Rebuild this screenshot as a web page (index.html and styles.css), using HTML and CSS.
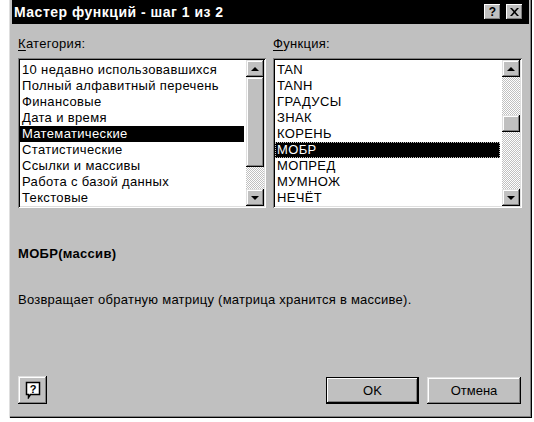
FILE: index.html
```html
<!DOCTYPE html>
<html lang="ru">
<head>
<meta charset="utf-8">
<title>Мастер функций</title>
<link rel="stylesheet" href="styles.css">
</head>
<body>
<div class="dialog">
  <div class="titlebar">
    <span class="title">Мастер функций - шаг 1 из 2</span>
    <div class="tbtns">
      <span class="tbtn">?</span>
      <span class="tbtn close"><svg width="9" height="8" viewBox="0 0 9 8"><path d="M0 0h2l2.5 2.8L7 0h2L5.5 4 9 8H7L4.5 5.2 2 8H0l3.5-4z" fill="#000"/></svg></span>
    </div>
  </div>
  <div class="content">
    <div class="lists">
      <div class="col">
        <div class="label"><u>К</u>атегория:</div>
        <div class="listbox">
          <ul class="items">
            <li>10 недавно использовавшихся</li>
            <li>Полный алфавитный перечень</li>
            <li>Финансовые</li>
            <li>Дата и время</li>
            <li class="sel">Математические</li>
            <li>Статистические</li>
            <li>Ссылки и массивы</li>
            <li>Работа с базой данных</li>
            <li>Текстовые</li>
          </ul>
          <div class="scrollbar">
            <div class="sbtn"><span class="up"></span></div>
            <div class="thumb big"></div>
            <div class="track"></div>
            <div class="sbtn"><span class="down"></span></div>
          </div>
        </div>
      </div>
      <div class="col">
        <div class="label"><u>Ф</u>ункция:</div>
        <div class="listbox">
          <ul class="items">
            <li>TAN</li>
            <li>TANH</li>
            <li>ГРАДУСЫ</li>
            <li>ЗНАК</li>
            <li>КОРЕНЬ</li>
            <li class="sel focus">МОБР</li>
            <li>МОПРЕД</li>
            <li>МУМНОЖ</li>
            <li>НЕЧЁТ</li>
          </ul>
          <div class="scrollbar">
            <div class="sbtn"><span class="up"></span></div>
            <div class="track t1"></div>
            <div class="thumb small"></div>
            <div class="track"></div>
            <div class="sbtn"><span class="down"></span></div>
          </div>
        </div>
      </div>
    </div>
    <div class="desc">
      <div class="sig">МОБР(массив)</div>
      <div class="text">Возвращает обратную матрицу (матрица хранится в массиве).</div>
    </div>
    <div class="footer">
      <button class="btn help"><svg width="16" height="18" viewBox="0 0 16 18"><path d="M1.5 1.5h13v12h-9l-2 3v-3h-2z" fill="#fff" stroke="#000" stroke-width="1.5"/><text x="8" y="11.5" font-family="Liberation Sans, sans-serif" font-weight="bold" font-size="11" text-anchor="middle" fill="#000">?</text></svg></button>
      <div class="spacer"></div>
      <button class="btn default">OK</button>
      <button class="btn">Отмена</button>
    </div>
  </div>
</div>
</body>
</html>
```
FILE: styles.css
```css
* { box-sizing: border-box; }
html, body {
  margin: 0;
  padding: 0;
  background: #fff;
}
body {
  font-family: "Liberation Sans", Arial, sans-serif;
  font-size: 13px;
  color: #000;
}
.dialog {
  margin-left: 9px;
  width: 523px;
  height: 418px;
  background: #c0c0c0;
  padding: 0 3px 3px 3px;
  display: flex;
  flex-direction: column;
  box-shadow: inset 1px 0 #dfdfdf, inset -1px -1px #000, inset -2px -2px #808080;
}
.titlebar {
  height: 24px;
  background: #000;
  color: #fff;
  display: flex;
  align-items: center;
  padding: 0 6px 0 2px;
}
.title {
  font-weight: bold;
  font-size: 14px;
  flex: 1;
  letter-spacing: 0.5px;
}
.tbtns {
  display: flex;
  gap: 5px;
}
.tbtn {
  width: 17px;
  height: 16px;
  background: #c0c0c0;
  color: #000;
  font-weight: bold;
  font-size: 12px;
  display: flex;
  align-items: center;
  justify-content: center;
  box-shadow: inset -1px -1px #000, inset 1px 1px #fff, inset -2px -2px #808080;
}
.content {
  flex: 1;
  display: flex;
  flex-direction: column;
  padding: 12px 8px 11px 6px;
}
.lists {
  display: grid;
  grid-template-columns: 248px 249px;
  column-gap: 7px;
}
.label {
  line-height: 16px;
  height: 16px;
  margin-bottom: 6px;
  letter-spacing: 0.3px;
}
.label u { text-decoration-thickness: 1px; text-underline-offset: 2px; }
.listbox {
  height: 150px;
  background: #fff;
  padding: 2px;
  display: flex;
  box-shadow: inset 1px 1px #808080, inset -1px -1px #fff, inset 2px 2px #000, inset -2px -2px #dfdfdf;
}
.items {
  list-style: none;
  margin: 0;
  padding: 2px 0 0 0;
  flex: 1;
}
.items li {
  height: 16px;
  line-height: 16px;
  padding-left: 2px;
  white-space: nowrap;
  letter-spacing: 0.35px;
}
.items li.sel {
  background: #000;
  color: #fff;
}
.items li.focus {
  outline: 1px dotted #c0c0c0;
  outline-offset: -1px;
}
.scrollbar {
  width: 18px;
  margin-left: 2px;
  display: flex;
  flex-direction: column;
}
.sbtn {
  height: 17px;
  background: #c0c0c0;
  display: flex;
  align-items: center;
  justify-content: center;
  box-shadow: inset -1px -1px #000, inset 1px 1px #dfdfdf, inset -2px -2px #808080, inset 2px 2px #fff;
}
.up, .down {
  width: 0;
  height: 0;
  border-left: 4px solid transparent;
  border-right: 4px solid transparent;
}
.up { border-bottom: 4px solid #000; }
.down { border-top: 4px solid #000; }
.thumb {
  background: #c0c0c0;
  box-shadow: inset -1px -1px #000, inset 1px 1px #dfdfdf, inset -2px -2px #808080, inset 2px 2px #fff;
}
.thumb.big { height: 90px; }
.thumb.small { height: 17px; }
.track {
  flex: 1;
  background: repeating-conic-gradient(#c0c0c0 0 25%, #fff 0 50%) 0 0 / 2px 2px;
}
.track.t1 { flex: 0 0 38px; }
.desc {
  margin-top: 38px;
}
.sig {
  font-weight: bold;
  line-height: 16px;
  letter-spacing: 0.3px;
}
.text {
  margin-top: 30px;
  line-height: 16px;
  letter-spacing: 0.25px;
}
.footer {
  margin-top: auto;
  display: flex;
  align-items: flex-end;
  gap: 8px;
}
.spacer { flex: 1; }
.btn {
  font-family: "Liberation Sans", Arial, sans-serif;
  font-size: 13px;
  color: #000;
  height: 27px;
  width: 94px;
  border: 0;
  background: #c0c0c0;
  padding: 0;
  display: flex;
  align-items: center;
  justify-content: center;
  box-shadow: inset -1px -1px #000, inset 1px 1px #dfdfdf, inset -2px -2px #808080, inset 2px 2px #fff;
}
.btn.help {
  width: 29px;
  height: 28px;
}
.btn.default {
  width: 93px;
  box-shadow: inset 0 0 0 1px #000, inset -2px -2px #000, inset 2px 2px #fff, inset -3px -3px #808080;
}
```
